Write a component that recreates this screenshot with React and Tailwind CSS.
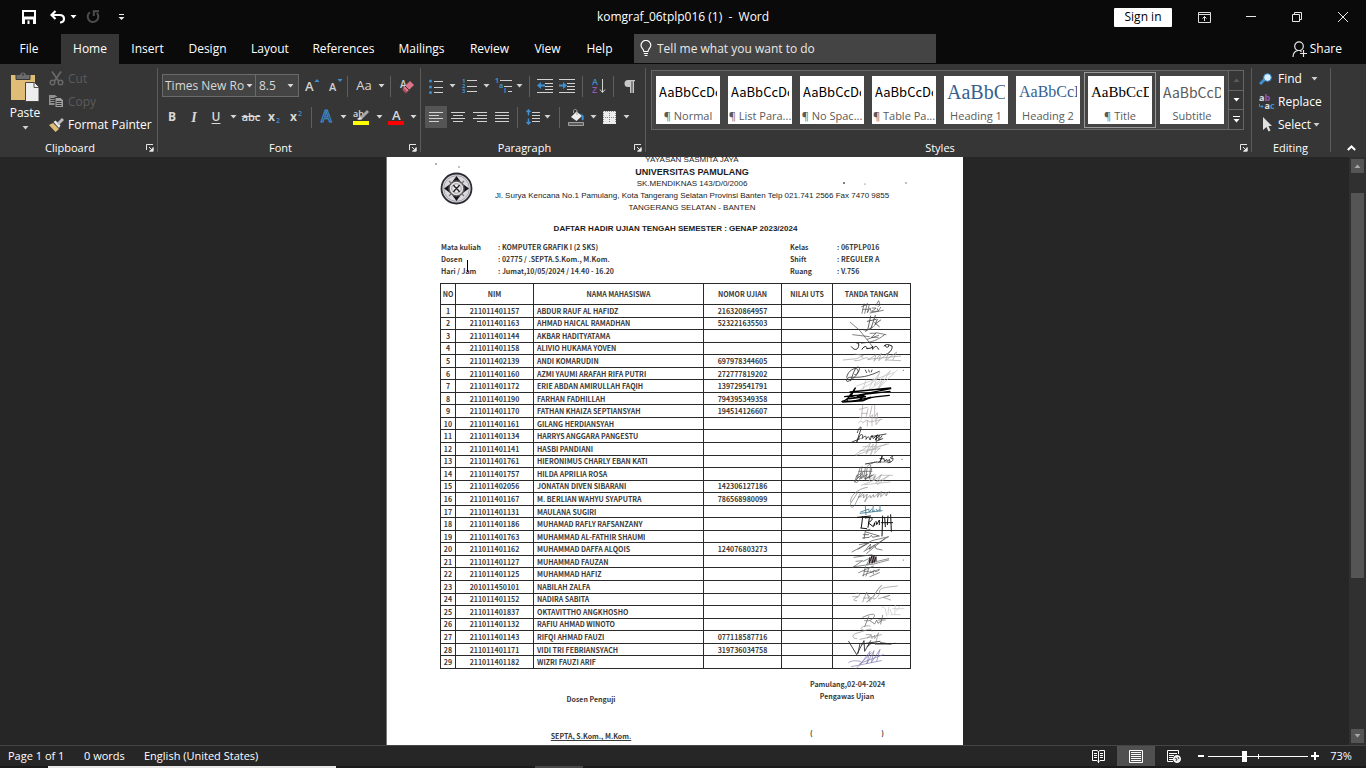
import React from "react";

const ui = "font-['Open_Sans','Noto_Sans',sans-serif]";

function Caret({ className = "" }) {
  return (
    <svg width="7" height="4" viewBox="0 0 7 4" className={"shrink-0 " + className} fill="currentColor" aria-hidden="true">
      <path d="M0.5 0h6L3.5 3.6z" />
    </svg>
  );
}

function IconButton({ label, className = "w-[22px]", children }) {
  return (
    <button type="button" aria-label={label} className={"flex h-[22px] shrink-0 items-center justify-center " + className}>
      {children}
    </button>
  );
}

function CaretButton({ label, className = "w-3" }) {
  return (
    <IconButton label={label} className={className}>
      <Caret />
    </IconButton>
  );
}

function Sep({ className = "mx-1" }) {
  return <div className={"h-[21px] w-px shrink-0 bg-[#5f5f5f] " + className} />;
}

function Launcher({ label }) {
  return (
    <button type="button" aria-label={label} className="flex h-3 w-3 items-center justify-center">
      <svg width="8" height="8" viewBox="0 0 8 8" fill="none" stroke="#e6e6e6" aria-hidden="true">
        <path d="M0.5 6V0.5H7M3 3l3 3" />
        <path d="M7.5 3v4.500H3z" fill="#e6e6e6" stroke="none" />
        <path d="M7 3.500V7H3.500" />
      </svg>
    </button>
  );
}

function Group({ title, className = "", launcher = true, children }) {
  return (
    <section aria-label={title} className={"flex shrink-0 flex-col border-r border-transparent " + className}>
      <div className="h-[76px]">{children}</div>
      <div className="flex h-4 items-center">
        <h2 className={"flex-1 text-center text-[11px] leading-4 " + (launcher ? "pr-1" : "")}>{title}</h2>
        {launcher && <Launcher label={title + " settings"} />}
      </div>
    </section>
  );
}

function Divider() {
  return <div className="mt-1 h-[84px] w-px shrink-0 bg-[#5c5c5c]" />;
}

function Lines({ rows, color = "#d2d2d2", width = 14, height = 11 }) {
  return (
    <svg width={width} height={height} viewBox={`0 0 ${width} ${height}`} stroke={color} aria-hidden="true">
      {rows.map(([a, b, y]) => (
        <path key={y} d={`M${a} ${y}H${b}`} />
      ))}
    </svg>
  );
}

function TitleBar() {
  return (
    <header className="grid h-[34px] grid-cols-[1fr_auto_1fr] items-center text-white">
      <div className="flex items-center pl-[22px]">
        <button type="button" aria-label="Save" className="flex w-[14px] justify-center">
          <svg width="14" height="14" viewBox="0 0 14 14" aria-hidden="true">
            <path fill="#fff" fillRule="evenodd" d="M0 0h14v14H0zM2 2v4.500h10V2zM3 9v5h8V9z" />
            <path fill="#0a0a0a" d="M3 9h8v3.500H3z" />
            <path fill="#fff" d="M2 8h10v1.500H2zM5.500 10.500h2V14h-2z" />
          </svg>
        </button>
        <button type="button" aria-label="Undo" className="ml-[14px]">
          <svg width="16" height="14" viewBox="0 0 16 14" fill="none" stroke="#fff" strokeWidth="2.200" aria-hidden="true">
            <path d="M5.500 1L1.500 5l4 4M2 5h7.500c3 0 4.500 1.700 4.500 4s-2 3.500-4 3.500" />
          </svg>
        </button>
        <button type="button" aria-label="Undo list" className="ml-1 text-white"><Caret /></button>
        <button type="button" aria-label="Repeat" disabled className="ml-[9px]">
          <svg width="14" height="14" viewBox="0 0 14 14" fill="none" stroke="#4d4d4d" strokeWidth="2" aria-hidden="true">
            <path d="M4 2.300A5.300 5.300 0 1 0 11 3.200M7.800 6V1.200H13" />
          </svg>
        </button>
        <button type="button" aria-label="Customize Quick Access Toolbar" className="ml-[18px]">
          <svg width="7" height="7" viewBox="0 0 7 7" fill="#e8e8e8" aria-hidden="true">
            <path d="M1 0h5v1H1zM0.500 3h6L3.500 6z" />
          </svg>
        </button>
      </div>
      <h1 className="text-[12px] leading-4 whitespace-pre">komgraf_06tplp016 (1)  -  Word</h1>
      <div className="flex items-center justify-end pr-[18px]">
        <button type="button" className="h-[19px] w-[58px] rounded-[1px] bg-white text-[12px] leading-[18px] text-black">Sign in</button>
        <button type="button" aria-label="Ribbon Display Options" className="ml-[26px]">
          <svg width="13" height="11" viewBox="0 0 13 11" fill="none" stroke="#e0e0e0" aria-hidden="true">
            <path d="M0.500 0.500h12v10H0.500zM0.500 2.500h12M6.500 9V4.500M4.500 6.500l2-2 2 2" />
          </svg>
        </button>
        <button type="button" aria-label="Minimize" className="ml-[35px]">
          <svg width="10" height="10" viewBox="0 0 10 10" stroke="#e8e8e8" aria-hidden="true"><path d="M0 4.500h10" /></svg>
        </button>
        <button type="button" aria-label="Restore Down" className="ml-9">
          <svg width="10" height="10" viewBox="0 0 10 10" fill="none" stroke="#e8e8e8" aria-hidden="true"><path d="M0.500 2.500h7v7h-7zM2.500 2.500v-2h7v7h-2" /></svg>
        </button>
        <button type="button" aria-label="Close" className="ml-9">
          <svg width="10" height="10" viewBox="0 0 10 10" fill="none" stroke="#e8e8e8" aria-hidden="true"><path d="M0 0l10 10M10 0L0 10" /></svg>
        </button>
      </div>
    </header>
  );
}

const tabs = [
  ["File", "w-[58px] mr-[3px]"],
  ["Home", "w-[58px] bg-[#363636]"],
  ["Insert", "w-[57px]"],
  ["Design", "w-[63px]"],
  ["Layout", "w-[62px]"],
  ["References", "w-[85px]"],
  ["Mailings", "w-[71px]"],
  ["Review", "w-[65px]"],
  ["View", "w-[51px]"],
  ["Help", "w-[53px]"],
];

function TabRow() {
  return (
    <nav className="flex h-[30px] items-stretch text-[12px] text-white">
      {tabs.map(([name, cls]) => (
        <button type="button" key={name} className={"shrink-0 text-center leading-[30px] " + cls}>{name}</button>
      ))}
      <label className="ml-2 flex h-[29px] w-[302px] items-center bg-[#444] pl-[6px]">
        <svg width="12" height="17" viewBox="0 0 12 17" fill="none" stroke="#fff" strokeWidth="1.200" aria-hidden="true">
          <path d="M3.800 11.500C3.800 9 1 8.300 1 5.300a4.800 4.800 0 0 1 9.800 0c0 3-2.800 3.700-2.800 6.200zM3.800 13.500H8M4.500 15.500h3" />
        </svg>
        <input aria-label="Tell me what you want to do" placeholder="Tell me what you want to do" className="ml-[5px] flex-1 bg-transparent text-[12px] outline-none placeholder:text-[#e8e8e8]" />
      </label>
      <button type="button" className="mr-6 ml-auto flex items-center">
        <svg width="16" height="17" viewBox="0 0 16 17" fill="none" stroke="#e8e8e8" strokeWidth="1.200" aria-hidden="true">
          <circle cx="7" cy="5.200" r="4.300" />
          <path d="M1 16c0-4 2.200-6 5-6.500M8 9.500l1.500 1.200M11.500 9v7M8 12.500h7" />
        </svg>
        <span className="ml-[2px]">Share</span>
      </button>
    </nav>
  );
}

function Clipboard() {
  return (
    <Group title="Clipboard" className="w-[157px]">
      <div className="flex h-full pl-[5px]">
        <button type="button" className="flex w-10 flex-col items-center justify-start pt-2">
          <svg width="28" height="30" viewBox="0 0 28 30" aria-hidden="true">
            <path fill="#e0bd76" d="M0 3h24v25H0z" />
            <path fill="#6b6b6b" stroke="#363636" strokeWidth="1" d="M5 2.500h4C9 .8 10.500 0 12 0s3 .8 3 2.500h4v5H5z" />
            <circle cx="12" cy="2.500" r="1" fill="#363636" />
            <path fill="#ededed" stroke="#444" strokeWidth="1" d="M14.500 10.500h9l4.500 4.500v14.500H14.500z" />
            <path fill="none" stroke="#555" d="M23 10.500v5h5" />
          </svg>
          <span className="mt-[3px] text-[12px] leading-4">Paste</span>
          <Caret className="mt-[5px] text-[#d0d0d0]" />
        </button>
        <div className="ml-1 flex flex-col pt-[3px] text-[12px] leading-[23px]">
          <button type="button" disabled className="flex h-[23px] items-center text-[#5c5c5c]">
            <svg width="15" height="15" viewBox="0 0 15 15" fill="none" stroke="#686868" strokeWidth="1.800" aria-hidden="true">
              <path d="M3 0.500l6.500 9.500M12 0.500L5.500 10" /><circle cx="3.500" cy="11.500" r="2.300" strokeWidth="1.500" /><circle cx="11.500" cy="11.500" r="2.300" strokeWidth="1.500" />
            </svg>
            <span className="ml-1">Cut</span>
          </button>
          <button type="button" disabled className="flex h-[23px] items-center text-[#5c5c5c]">
            <svg width="15" height="13" viewBox="0 0 15 13" aria-hidden="true">
              <path fill="#909090" d="M0 0h6l2.500 2v8H0z" /><path stroke="#363636" d="M1.500 3.500h5M1.500 5.500h5M1.500 7.500h5" />
              <path fill="#a0a0a0" stroke="#363636" d="M6 2.500h5.500l3 2.500v7.500H6z" /><path stroke="#363636" d="M7.500 6.500h5M7.500 8.500h5M7.500 10.500h5" />
            </svg>
            <span className="ml-1">Copy</span>
          </button>
          <button type="button" className="flex h-[23px] items-center">
            <svg width="15" height="14" viewBox="0 0 15 14" aria-hidden="true">
              <path fill="#e0bd76" d="M0 7l4-2 6 6-3.500 3z" /><path fill="#e8e8e8" d="M4.500 4l2-1.500 5 5L10 10z" /><path stroke="#b8b8b8" strokeWidth="3" d="M9 6l5-5" />
            </svg>
            <span className="ml-1 whitespace-nowrap">Format Painter</span>
          </button>
        </div>
      </div>
    </Group>
  );
}

function FontGroup() {
  return (
    <Group title="Font" className="w-[262px]">
      <div className="flex h-[33px] items-end pl-1 text-[#d8d8d8]">
        <div className="flex h-[23px] w-[94px] items-center border border-[#6a6a6a] bg-[#444]">
          <input aria-label="Font name" defaultValue="Times New Ro" className="w-[82px] bg-transparent pl-[2px] text-[12px] outline-none" />
          <button type="button" aria-label="Font list" className="ml-px"><Caret /></button>
        </div>
        <div className="-ml-px flex h-[23px] w-[44px] items-center border border-[#6a6a6a] bg-[#444]">
          <input aria-label="Font size" defaultValue="8.5" className="w-[31px] bg-transparent pl-[3px] text-[12px] outline-none" />
          <button type="button" aria-label="Font size list"><Caret /></button>
        </div>
        <IconButton label="Increase Font Size" className="ml-px w-6">
          <svg width="16" height="18" viewBox="0 0 16 18" aria-hidden="true"><text x="1" y="14" fontSize="13" fontWeight="600" fill="#d2d2d2">A</text><path fill="#3f8ed0" d="M10.500 5L13 2l2.500 3z" /></svg>
        </IconButton>
        <IconButton label="Decrease Font Size">
          <svg width="16" height="18" viewBox="0 0 16 18" aria-hidden="true"><text x="2" y="14" fontSize="11" fontWeight="600" fill="#d2d2d2">A</text><path fill="#3f8ed0" d="M10.500 2h5L13 5z" /></svg>
        </IconButton>
        <Sep className="ml-px mr-1" />
        <IconButton label="Change Case" className="w-6"><span className="text-[13px]">Aa</span></IconButton>
        <CaretButton label="Case options" className="w-[10px]" />
        <Sep className="mr-2 ml-1" />
        <IconButton label="Clear All Formatting" className="w-4">
          <svg width="16" height="18" viewBox="0 0 16 18" aria-hidden="true"><text x="1" y="11" fontSize="10" fontWeight="600" fill="#d2d2d2">A</text><path fill="#dd7488" d="M4 11l7-7 4 4-7 7z" /><path fill="#b9505f" d="M4 11l4 4-1 1.500L3.500 13z" /><path stroke="#363636" d="M6 9l4.500 4.500" /></svg>
        </IconButton>
      </div>
      <div className="flex h-[31px] items-end pl-[3px] text-[#d8d8d8]">
        <IconButton label="Bold"><b className="text-[12px]">B</b></IconButton>
        <IconButton label="Italic"><i className="font-['Liberation_Serif',serif] text-[14px] font-bold">I</i></IconButton>
        <IconButton label="Underline"><span className="text-[12px] font-semibold underline underline-offset-2">U</span></IconButton>
        <CaretButton label="Underline options" />
        <IconButton label="Strikethrough" className="w-6"><span className="text-[11px] font-semibold line-through">abc</span></IconButton>
        <IconButton label="Subscript"><svg width="14" height="18" viewBox="0 0 14 18" aria-hidden="true"><text x="1" y="13" fontSize="12" fontWeight="700" fill="#d8d8d8">x</text><text x="9" y="15" fontSize="7" fontWeight="600" fill="#3f8ed0">2</text></svg></IconButton>
        <IconButton label="Superscript"><svg width="14" height="18" viewBox="0 0 14 18" aria-hidden="true"><text x="1" y="13" fontSize="12" fontWeight="700" fill="#d8d8d8">x</text><text x="9" y="8" fontSize="7" fontWeight="600" fill="#3f8ed0">2</text></svg></IconButton>
        <Sep className="mx-1" />
        <IconButton label="Text Effects"><svg width="16" height="20" viewBox="0 0 16 20" aria-hidden="true"><text x="2" y="15" fontSize="16" fontWeight="600" fill="#2b3a4a" stroke="#3f8ed0" strokeWidth="1">A</text></svg></IconButton>
        <CaretButton label="Text effect options" className="w-[10px]" />
        <IconButton label="Text Highlight Color" className="w-[26px]">
          <svg width="16" height="18" viewBox="0 0 16 18" aria-hidden="true"><text x="0" y="9" fontSize="9" fontWeight="600" fill="#d8d8d8">ab</text><path stroke="#a9a9a9" strokeWidth="3" d="M7 11l8-8" /><path fill="#e8e8e8" d="M4 11l3-2 2 2-3 1z" /><path fill="#ff0" d="M0 13h16v4H0z" /></svg>
        </IconButton>
        <CaretButton label="Highlight options" className="w-[10px]" />
        <IconButton label="Font Color" className="w-[24px]">
          <svg width="16" height="18" viewBox="0 0 16 18" aria-hidden="true"><text x="4" y="12" fontSize="13" fontWeight="600" fill="#d8d8d8">A</text><path fill="#f00" d="M0 13h16v4H0z" /></svg>
        </IconButton>
        <CaretButton label="Font color options" className="w-[10px]" />
      </div>
    </Group>
  );
}

function Paragraph() {
  return (
    <Group title="Paragraph" className="w-[224px]">
      <div className="flex h-[33px] items-end pl-[6px] text-[#d2d2d2]">
        <IconButton label="Bullets" className="w-[18px]">
          <svg width="14" height="15" viewBox="0 0 14 15" stroke="#d2d2d2" aria-hidden="true"><path d="M5 2.500h9M5 8.500h9M5 13.500h9" /><g fill="#3f8ed0" stroke="none"><circle cx="1.500" cy="2" r="1.500" /><circle cx="1.500" cy="8" r="1.500" /><circle cx="1.500" cy="13.500" r="1.500" /></g></svg>
        </IconButton>
        <CaretButton label="Bullet options" className="w-[14px]" />
        <IconButton label="Numbering" className="w-[20px]">
          <svg width="15" height="18" viewBox="0 0 15 18" stroke="#d2d2d2" aria-hidden="true"><path d="M5 3.500h10M5 9.500h10M5 14.500h10" /><g fill="#3f8ed0" stroke="none" fontSize="6" fontWeight="700"><text x="0" y="6">1</text><text x="0" y="11">2</text><text x="0" y="16">3</text></g></svg>
        </IconButton>
        <CaretButton label="Numbering options" className="w-[14px]" />
        <IconButton label="Multilevel List" className="w-[20px]">
          <svg width="17" height="18" viewBox="0 0 17 18" stroke="#d2d2d2" aria-hidden="true"><path d="M5 3.500h12M9 9.500h8M13 14.500h4" /><g fill="#3f8ed0" stroke="none" fontSize="7" fontWeight="700"><text x="0" y="6">1</text><text x="4" y="11">a</text><text x="9" y="16">i</text></g></svg>
        </IconButton>
        <CaretButton label="List options" className="w-[12px]" />
        <Sep className="mx-1" />
        <IconButton label="Decrease Indent">
          <svg width="16" height="14" viewBox="0 0 16 14" stroke="#d2d2d2" aria-hidden="true"><path d="M0 0.500h16M8 4.500h8M8 7.500h8M8 10.500h8M0 13.500h16" /><path fill="#3f8ed0" stroke="none" d="M0 6.500L4 3v2.500h4v2H4V10z" /></svg>
        </IconButton>
        <IconButton label="Increase Indent">
          <svg width="16" height="14" viewBox="0 0 16 14" stroke="#d2d2d2" aria-hidden="true"><path d="M0 0.500h16M8 4.500h8M8 7.500h8M8 10.500h8M0 13.500h16" /><path fill="#3f8ed0" stroke="none" d="M8 6.500L4 3v2.500H0v2h4V10z" /></svg>
        </IconButton>
        <Sep className="mr-1 ml-1" />
        <IconButton label="Sort" className="w-6">
          <svg width="14" height="18" viewBox="0 0 14 18" aria-hidden="true"><text x="0" y="8" fontSize="9" fontWeight="600" fill="#3f8ed0">A</text><text x="0" y="16" fontSize="9" fontWeight="600" fill="#9259b5">Z</text><path fill="none" stroke="#d2d2d2" d="M10.500 2v13M8 12.500l2.500 3 2.500-3" /></svg>
        </IconButton>
        <Sep className="mr-1 ml-[2px]" />
        <IconButton label="Show or hide marks">
          <svg width="11" height="13" viewBox="0 0 11 13" aria-hidden="true"><path fill="#c8c8c8" d="M4 0h7v1.200h-1V13H8.500V1.200h-1V13H6V7H4a3.500 3.500 0 0 1 0-7z" /></svg>
        </IconButton>
      </div>
      <div className="flex h-[31px] items-end pl-1 text-[#d2d2d2]">
        <IconButton label="Align Left" className="w-[22px] bg-[#555]"><Lines rows={[[0, 14, 0.5], [0, 10, 3.5], [0, 14, 6.5], [0, 10, 9.5]]} /></IconButton>
        <IconButton label="Center"><Lines rows={[[0, 14, 0.5], [2, 12, 3.5], [0, 14, 6.5], [2, 12, 9.5]]} /></IconButton>
        <IconButton label="Align Right"><Lines rows={[[0, 14, 0.5], [4, 14, 3.5], [0, 14, 6.5], [4, 14, 9.5]]} /></IconButton>
        <IconButton label="Justify"><Lines rows={[[0, 14, 0.5], [0, 14, 3.5], [0, 14, 6.5], [0, 14, 9.5]]} /></IconButton>
        <Sep className="mx-1" />
        <IconButton label="Line Spacing">
          <svg width="14" height="16" viewBox="0 0 14 16" fill="none" stroke="#d2d2d2" aria-hidden="true"><path d="M6 3.500h8M6 6.500h8M6 9.500h8M6 12.500h8" /><path stroke="#3f8ed0" strokeWidth="1.500" d="M2.500 1v5.500M0.500 3l2-2 2 2M2.500 15V9.500M0.500 13l2 2 2-2" /></svg>
        </IconButton>
        <CaretButton label="Spacing options" className="w-[6px]" />
        <Sep className="mr-1 ml-[9px]" />
        <IconButton label="Shading" className="w-6">
          <svg width="17" height="17" viewBox="0 0 17 17" aria-hidden="true"><path fill="#ededed" d="M3 8l5.500-5.500L14 7l-5.500 5z" /><path fill="none" stroke="#a0a0a0" d="M5.500 4V1.500C5.500 0 9 0 9 2v4" /><path fill="#3f8ed0" d="M12 5c3 0 4.500 2 3.500 6-1 1-2 0-2-1 .5-1.500.5-3-1.500-5z" /><path fill="#5a5a5a" stroke="#a0a0a0" d="M0.500 13.500h15v3h-15z" /></svg>
        </IconButton>
        <CaretButton label="Shading options" className="w-[10px]" />
        <IconButton label="Borders" className="w-[22px]">
          <svg width="13" height="13" viewBox="0 0 13 13" aria-hidden="true"><path fill="#ededed" d="M0 0h13v13H0z" /><path stroke="#8a8a8a" strokeDasharray="1 1" d="M0.500 0v12M12.500 0v12M6.500 0v12M0 0.500h13M0 6.500h13" /></svg>
        </IconButton>
        <CaretButton label="Border options" className="w-[12px]" />
      </div>
    </Group>
  );
}

const calibri = "font-['Noto_Sans_CJK_SC',sans-serif] text-[13px] text-black";
const styles = [
  ["¶ Normal", "AaBbCcDc", calibri],
  ["¶ List Para...", "AaBbCcDc", calibri],
  ["¶ No Spac...", "AaBbCcDc", calibri],
  ["¶ Table Pa...", "AaBbCcDc", calibri],
  ["Heading 1", "AaBbC", "font-['Liberation_Serif',serif] text-[20px] text-[#365f91]"],
  ["Heading 2", "AaBbCcI", "font-['Liberation_Serif',serif] text-[16px] text-[#365f91]"],
  ["¶ Title", "AaBbCcD", "font-['Liberation_Serif',serif] text-[15px] text-black"],
  ["Subtitle", "AaBbCcD", "font-['Noto_Sans_CJK_SC',sans-serif] text-[14px] text-[#5a5a5a]"],
];

function Styles() {
  return (
    <Group title="Styles" className="min-w-0 flex-1">
      <div className="flex h-full items-start pt-[6px] pr-[7px] pl-[5px]">
        <div className="flex h-[60px] flex-1 border border-[#666] bg-[#444]">
          <div className="flex flex-1 py-px">
            {styles.map(([name, sample, cls]) => (
              <button
                type="button"
                key={name}
                className={"flex h-[56px] w-[72px] shrink-0 border p-[3px] " + (name === "¶ Title" ? "border-[#9a9a9a]" : "border-transparent")}
              >
                <span className="flex h-12 w-16 flex-col overflow-hidden bg-white px-[3px]">
                  <span className={"flex h-8 items-center overflow-hidden whitespace-nowrap " + cls}>{sample}</span>
                  <span className="-mx-[3px] h-4 text-center text-[11px] leading-4 whitespace-nowrap text-[#5a5a5a]">{name}</span>
                </span>
              </button>
            ))}
          </div>
          <div className="flex w-[15px] flex-col divide-y divide-[#666] border-l border-[#666] bg-[#363636] text-white">
            <button type="button" aria-label="Previous styles" className="flex flex-1 items-center justify-center text-[#5c5c5c]"><Caret className="rotate-180" /></button>
            <button type="button" aria-label="Next styles" className="flex flex-1 items-center justify-center"><Caret /></button>
            <button type="button" aria-label="More styles" className="flex flex-1 items-center justify-center">
              <svg width="7" height="7" viewBox="0 0 7 7" fill="currentColor" aria-hidden="true"><path d="M0 0h7v1H0zM0.500 3h6L3.500 6.500z" /></svg>
            </button>
          </div>
        </div>
      </div>
    </Group>
  );
}

function Editing() {
  return (
    <Group title="Editing" launcher={false} className="w-[78px]">
      <div className="flex flex-col pt-[3px] pl-[7px] text-[12px]">
        <button type="button" className="flex h-[23px] items-center">
          <svg width="14" height="12" viewBox="0 0 14 12" aria-hidden="true"><path stroke="#3f8ed0" strokeWidth="3" d="M1 11l5-5" /><circle cx="8.500" cy="4.500" r="3.800" fill="#d9efff" stroke="#3f8ed0" /></svg>
          <span className="ml-[5px]">Find</span><Caret className="ml-[9px] text-[#d0d0d0]" />
        </button>
        <button type="button" className="flex h-[23px] items-center">
          <svg width="17" height="18" viewBox="0 0 17 18" aria-hidden="true"><g fontSize="9" fontWeight="700"><text x="0" y="8" fill="#e0e0e0">a</text><text x="5.500" y="8" fill="#9259b5">b</text><text x="5.500" y="16" fill="#e0e0e0">a</text><text x="11" y="16" fill="#3f8ed0">c</text></g><path fill="none" stroke="#3f8ed0" d="M0.500 11v2.500H4M2.500 12L4 13.500 2.500 15" /></svg>
          <span className="ml-[2px]">Replace</span>
        </button>
        <button type="button" className="flex h-[23px] items-center pl-1">
          <svg width="9" height="15" viewBox="0 0 9 15" aria-hidden="true"><path fill="#e0e0e0" d="M0 0l9 9H5.500l2 4.500-2 1L3.500 10 0 13z" /></svg>
          <span className="ml-[6px]">Select</span><Caret className="ml-[2px] text-[#d0d0d0]" />
        </button>
      </div>
    </Group>
  );
}

function Ribbon() {
  return (
    <div className="flex h-[93px] shrink-0 bg-[#363636] text-white">
      <Clipboard />
      <Divider />
      <FontGroup />
      <Divider />
      <Paragraph />
      <Divider />
      <Styles />
      <Divider />
      <Editing />
      <Divider />
      <button type="button" aria-label="Collapse the Ribbon" className="flex w-[35px] items-end justify-center pr-0 pb-[6px] pl-[6px]">
        <svg width="9" height="6" viewBox="0 0 9 6" fill="none" stroke="#fff" strokeWidth="2" aria-hidden="true"><path d="M0.800 5l3.700-3.500L8.200 5" /></svg>
      </button>
    </div>
  );
}

const students = [
  ["211011401157", "ABDUR RAUF AL HAFIDZ", "216320864957"],
  ["211011401163", "AHMAD HAICAL RAMADHAN", "523221635503"],
  ["211011401144", "AKBAR HADITYATAMA", ""],
  ["211011401158", "ALIVIO HUKAMA YOVEN", ""],
  ["211011402139", "ANDI KOMARUDIN", "697978344605"],
  ["211011401160", "AZMI YAUMI ARAFAH RIFA PUTRI", "272777819202"],
  ["211011401172", "ERIE ABDAN AMIRULLAH FAQIH", "139729541791"],
  ["211011401190", "FARHAN FADHILLAH", "794395349358"],
  ["211011401170", "FATHAN KHAIZA SEPTIANSYAH", "194514126607"],
  ["211011401161", "GILANG HERDIANSYAH", ""],
  ["211011401134", "HARRYS ANGGARA PANGESTU", ""],
  ["211011401141", "HASBI PANDIANI", ""],
  ["211011401761", "HIERONIMUS CHARLY EBAN KATI", ""],
  ["211011401757", "HILDA APRILIA ROSA", ""],
  ["211011402056", "JONATAN DIVEN SIBARANI", "142306127186"],
  ["211011401167", "M. BERLIAN WAHYU SYAPUTRA", "786568980099"],
  ["211011401131", "MAULANA SUGIRI", ""],
  ["211011401186", "MUHAMAD RAFLY RAFSANZANY", ""],
  ["211011401763", "MUHAMMAD AL-FATHIR SHAUMI", ""],
  ["211011401162", "MUHAMMAD DAFFA ALQOIS", "124076803273"],
  ["211011401127", "MUHAMMAD FAUZAN", ""],
  ["211011401125", "MUHAMMAD HAFIZ", ""],
  ["201011450101", "NABILAH ZALFA", ""],
  ["211011401152", "NADIRA SABITA", ""],
  ["211011401837", "OKTAVITTHO ANGKHOSHO", ""],
  ["211011401132", "RAFIU AHMAD WINOTO", ""],
  ["211011401143", "RIFQI AHMAD FAUZI", "077118587716"],
  ["211011401171", "VIDI TRI FEBRIANSYACH", "319736034758"],
  ["211011401182", "WIZRI FAUZI ARIF", ""],
];

function Signatures() {
  return (
    <svg width="81" height="374" viewBox="150 54 243 1122" fill="none" strokeLinecap="round" strokeLinejoin="round" className="pointer-events-none absolute top-[15px] right-0" aria-hidden="true">
      <g stroke="#444" strokeWidth="2">
        <path d="M245 80l16-6M252 72l-6 28M262 70l-8 30M248 88h16M268 74l-6 24 8-14 4 12M276 84h12l-12 10h14M292 86l2 8 8-12M270 99l40-8M288 76l8-14 4 12-6 6" />
        <path d="M272 108l-8 38M286 106l-14 42-20 2M292 118l-8 18M262 124l26-6M286 132l16-12M284 128l14 12M256 154l24-14" strokeWidth="2.500" />
        <path d="M211 127l28 24 38 48M218 164l50 6M270 160h18l-14 12h20M244 190c20-4 40-2 70-26M262 178l34-12M288 158l30 6" />
        <path d="M228 188l8 2c2 16-8 22-16 16l-6-6M246 208c4-10 16-12 14-2l14-2 4-6v10c4-8 10-12 14-6l4 6M312 198c6-6 14-6 14 0s-12 4-10-2M326 194l10 4c2 10-6 20-16 24" stroke="#222" strokeWidth="3" />
      </g>
      <g stroke="#999" strokeWidth="2">
        <path d="M190 240l40-4 20-10-26-4M224 242c20 0 34-8 20-12M250 236c10-6 20-2 14 4l24-16-6 20 22-24-8 22 30-24-10 24 34-26-12 24M264 238l98-10M320 240l42 2" />
        <path d="M240 330l40-24 20-30-18 40 50-44-36 52 56-54M230 318l110-40M258 300l-10 30M280 296l-14 36 40-30-14 26" stroke="#bbb" />
      </g>
      <path d="M212 302c10-30 16-44 24-40s-6 26-12 22M200 292c4-24 30-32 34-22s-16 30-30 34c-8 2-6-10 4-12 20-2 40 6 90-18M256 270l4 8M266 270l2 6M276 270l-2 6" stroke="#333" strokeWidth="2.500" />
      <circle cx="370" cy="271" r="1.500" fill="#333" />
      <g stroke="#000" strokeWidth="4">
        <path d="M186 364c20-4 26-20 40-40l-14 26 120-24M210 336l122-12M194 350l136-16M214 340c-14 18-20 26 0 24 30-4 50-14 114-18M232 350l20-4-12 12 28-4" />
        <path d="M188 366l60-4 24-10M206 356l50-6" strokeWidth="5" />
      </g>
      <g stroke="#a39a9e" strokeWidth="2">
        <path d="M238 388l24-6M248 376l-4 40M264 386l-6 26M246 400h16M276 378l-8 36 10-10v10M284 376v38M286 408l6-10v16M236 428c10-10 8-4 12 0l12-8 10 6 36-8M262 422v16M276 418v20M288 414v20l12-14M238 412l56 2" />
      </g>
      <g stroke="#222" strokeWidth="2.500"><path d="M232 458c6-20 14-22 10-8l-12 36 10-20c8-6 10 0 6 10 10-12 14-8 12 2 6-12 10-8 12 2l6-14 4 10 12-12-6 16 12-14-2 14 10-12M216 486l24-10M272 470l46-8M290 468l-2 16 20-8" /></g>
      <path d="M226 524l30-20 16-16-14 34 22-30-8 32 18-34-6 30 16-16M228 526l92-34M248 500h42l36-8M240 512l60-6" stroke="#aaa" strokeWidth="2" />
      <g stroke="#111" strokeWidth="2.500"><path d="M256 552l34-6M294 548c8-4 14-16 12-20l-6 20M300 536h12M312 538l2 6 6-6 2 6 6-6 2 6M338 530c-10 0-8 8 0 4 4 8-6 14-14 14" /><path d="M290 546h40" strokeWidth="1.500" /></g>
      <circle cx="366" cy="538" r="1.500" fill="#333" />
      <path d="M240 564l-8 30M246 560l-6 36 10-10 4 10M256 564l-4 24M262 560l-6 40 10-12M272 556l-4 40M276 562l-8 32M224 606c10-20 20-20 16-10s-16 18-14 6M264 556l20-10M236 574h40" stroke="#555" strokeWidth="2" />
      <path d="M276 584l-8 18 20-18-6 18 22-18-6 14M304 586h34" stroke="#aaa" strokeWidth="2" />
      <g transform="translate(0 570)" strokeWidth="2">
        <path d="M228 20l24-16M232 14l-8 20 24-24-4 16 18-14-6 14 20-10M262 24l20-10M284 20l-6 12" stroke="#555" />
        <path d="M244 46l40-16 20-16-16 24 40-22-36 28M254 44l76-8" stroke="#aaa" />
        <path d="M234 66l-22 34c-4 14 8 16 14 2l16-34c8-4 6 8-8 14 12-2 14-6 18-10l-2 12 12-12-4 16c-2 12-8 8 0 0l12-12 2 8 8-10 2 8 14-14-4 14 12-18-2 16 16-14v12l10-14M212 96c-4-16 20-40 50-44" stroke="#777" />
        <path d="M242 126l22-8M256 108l2 26M266 118l2 8 8-10M280 106l-2 20 6-6M290 118l2 6 6-6M300 106v18M240 130l66-8" stroke="#39738a" strokeWidth="2.500" />
        <path d="M232 142l40-4M248 140l-4 32M268 144l-4 28M256 144c26-6 26 6 8 14l16 12 4-12v8M288 154l2 10 8-14v14M308 138l-2 60M314 142l2 28M324 138l-2 26M332 134l2 50M304 158h34M242 174l18 2" stroke="#111" strokeWidth="3" />
        <path d="M254 182l16-4M256 184l-4 22M250 194h16M248 204l20-2 6-6 4 6 18-4M258 186l40 12" stroke="#333" />
        <path d="M216 246l60-34 50-12-74 44M238 224l30-6-34 20M258 238l14-16-4 16 16-12 4 10 18 4M260 250l54-44" stroke="#444" />
        <path d="M222 262l54-8M228 274l20-2-30 20M250 274l20-10-10 20 28-14M222 290l60-8 44-12M292 274l34-8" stroke="#555" />
        <path d="M270 262l-2 18 8-22v22l6-22v20l6-18v16" stroke="#221315" strokeWidth="3" />
        <circle cx="370" cy="270" r="1.500" fill="#333" />
        <path d="M236 308l44-20M256 290l-6 28M266 296l-8 22M252 304h14M270 308c-4-4 6-8 4 0l6-6v10M282 300l6 6 10-6M248 316l50-18M270 320l28-12" stroke="#555" />
        <path d="M218 380h16M228 370c14-4 14 8 0 14-10 6-8 8 2 8M248 396l12-30 10 28M250 384h20M262 374l14 12-16 10 22-20 18-26c10-10 4 0-8 10l-14 26c10 4 20-10 20-20 0-16 30-14 54-18M296 386l34-10-20 6 22 8" stroke="#888" />
        <path d="M306 410l10 6 4 22M326 412l-2 22M330 418l6 14M346 406l-2 28M338 416h34M350 422l10-14M332 434h28" stroke="#c4c4c4" />
        <path d="M248 442c30-14 44-12 30 4-10 8-14 6-24 6M266 440l-12 30M270 452l14 10 6-12 4 10 8-6M308 436l-6 26M296 450h20" stroke="#555" />
        <path d="M250 480c-20-4 6-16 20-12M230 506c-16 0-16-14 6-18 30-10 40-16 40-4M258 494h16l-12 10M274 496l2 10 8-10v10l12-18-10 34M240 508l64-14" stroke="#888" />
        <path d="M206 514l24 40 22-42M240 520l-6 30M252 514l2 30 18-32M262 530l14-12M246 522l54-8M286 522h40l20-2M302 518l30 4" stroke="#222" strokeWidth="2.500" />
        <path d="M206 578c10-8 20-6 36-4M228 596l46-48M240 584l30-40-10 38 22-40-8 36 26-40-10 36M214 590l90-18M240 580l70-26" stroke="#7a74ad" />
      </g>
    </svg>
  );
}

function Emblem() {
  return (
    <svg width="33" height="33" viewBox="0 0 33 33" className="mt-[18px] shrink-0" aria-label="Universitas Pamulang emblem" role="img">
      <circle cx="16.500" cy="16.500" r="15" fill="#dcd9de" stroke="#2b2b33" strokeWidth="1.800" />
      <circle cx="16.500" cy="16.500" r="12.800" fill="none" stroke="#a5a2aa" strokeWidth="1" />
      <path fill="#15151a" d="M16.500 4l4 5.500h-8zM16.500 29l4-5.500h-8zM4 16.500l5.500-4v8zM29 16.500l-5.500-4v8z" />
      <circle cx="16.500" cy="16.500" r="7.500" fill="#e9e7eb" stroke="#555" strokeWidth="1.500" />
      <circle cx="16.500" cy="16.500" r="4.800" fill="none" stroke="#999" strokeWidth="1" />
      <path fill="none" stroke="#222" strokeWidth="1.500" d="M13.500 13c1.500 3 4.500 4 6 7M19.500 13c-1.500 3-4.500 4-6 7" />
      <path fill="none" stroke="#777" strokeWidth="1.300" d="M9 9l3 3M24 9l-3 3M9 24l3-3M24 24l-3-3" />
    </svg>
  );
}

function Info({ rows, className }) {
  return (
    <dl className={"grid leading-3 " + className}>
      {rows.map(([k, v]) => (
        <React.Fragment key={k}>
          <dt>{k}</dt>
          <dd className="whitespace-nowrap">: {v}</dd>
        </React.Fragment>
      ))}
    </dl>
  );
}

function Page() {
  const head = "border border-[#2a2a2a] p-0 font-bold";
  const cell = "border border-[#2a2a2a] p-0";
  return (
    <article className="relative w-[577px] shrink-0 overflow-hidden border-l border-[#777] bg-white pr-[52px] pl-[53px] font-['Noto_Sans_CJK_SC',sans-serif] text-[7px] font-bold text-[#3a3a3a]">
      <div className="-mt-[3px] flex font-['Liberation_Sans',sans-serif] text-[8px] leading-3 font-normal text-[#1c1c1c]">
        <Emblem />
        <div className="flex-1 text-center whitespace-nowrap">
          <p>YAYASAN SASMITA JAYA</p>
          <p className="text-[9px] font-bold">UNIVERSITAS PAMULANG</p>
          <p>SK.MENDIKNAS 143/D/0/2006</p>
          <p>Jl. Surya Kencana No.1 Pamulang, Kota Tangerang Selatan Provinsi Banten Telp 021.741 2566 Fax 7470 9855</p>
          <p>TANGERANG SELATAN - BANTEN</p>
        </div>
      </div>
      <h2 className="mt-[9px] text-center font-['Liberation_Sans',sans-serif] text-[8px] leading-3 font-bold text-[#1c1c1c]">DAFTAR HADIR UJIAN TENGAH SEMESTER : GENAP 2023/2024</h2>
      <div className="mt-[6px] flex justify-between">
        <Info className="grid-cols-[57px_auto] pl-px" rows={[["Mata kuliah", "KOMPUTER GRAFIK I (2 SKS)"], ["Dosen", "02775 / .SEPTA.S.Kom., M.Kom."], ["Hari / Jam", "Jumat,10/05/2024 / 14.40 - 16.20"]]} />
        <Info className="w-[121px] grid-cols-[47px_auto]" rows={[["Kelas", "06TPLP016"], ["Shift", "REGULER A"], ["Ruang", "V.756"]]} />
      </div>
      <div className="relative mt-[6px]">
        <table className="h-[386px] w-full table-fixed border-collapse text-center leading-[10px]">
          <colgroup>
            <col className="w-[15px]" />
            <col className="w-[78px]" />
            <col className="w-[170px]" />
            <col className="w-[78px]" />
            <col className="w-[51px]" />
            <col />
          </colgroup>
          <thead>
            <tr className="h-[21px]">
              {["NO", "NIM", "NAMA MAHASISWA", "NOMOR UJIAN", "NILAI UTS", "TANDA TANGAN"].map((h) => (
                <th key={h} scope="col" className={head}>{h}</th>
              ))}
            </tr>
          </thead>
          <tbody>
            {students.map(([nim, name, no], i) => (
              <tr key={nim}>
                <td className={cell}>{i + 1}</td>
                <td className={cell}>{nim}</td>
                <td className={cell + " pl-[3px] text-left whitespace-nowrap"}>{name}</td>
                <td className={cell}>{no}</td>
                <td className={cell}></td>
                <td className={cell}></td>
              </tr>
            ))}
          </tbody>
        </table>
        <Signatures />
      </div>
      <div className="mt-[9px] flex justify-between leading-3">
        <div className="ml-[91px] w-[120px] pt-[15px] text-center">
          <p>Dosen Penguji</p>
          <p className="mt-[25px] underline">SEPTA, S.Kom., M.Kom.</p>
        </div>
        <div className="mr-[27px] w-[74px] text-center whitespace-nowrap">
          <p>Pamulang,02-04-2024</p>
          <p>Pengawas Ujian</p>
          <p className="mt-[25px] flex justify-between"><span>(</span><span>)</span></p>
        </div>
      </div>
      <div className="absolute top-[103px] left-20 h-3 w-px bg-black" />
      <svg width="577" height="40" viewBox="0 0 577 40" className="pointer-events-none absolute top-0 left-0" aria-hidden="true">
        <g fill="#555"><circle cx="49" cy="7" r="0.800" /><circle cx="72" cy="10" r="0.700" /><circle cx="457" cy="26" r="1" /><circle cx="478" cy="27" r="0.600" /><circle cx="519" cy="26" r="0.700" /></g>
      </svg>
    </article>
  );
}

function ScrollBar() {
  const btn = "flex h-[14px] w-[13px] items-center justify-center bg-[#555] text-[#a8a8a8]";
  return (
    <div className="flex w-[17px] shrink-0 flex-col items-center bg-[#303030] pt-[2px] pb-[2px]">
      <button type="button" aria-label="Scroll up" className={btn}><Caret className="rotate-180" /></button>
      <div className="mt-5 h-[385px] w-[13px] bg-[#555]" />
      <button type="button" aria-label="Scroll down" className={btn + " mt-auto"}><Caret /></button>
    </div>
  );
}

function StatusBar() {
  return (
    <footer className="flex h-[21px] shrink-0 items-stretch border-t border-[#444] bg-[#262626] pl-2 text-[11px] leading-5 text-white">
      <span className="w-[76px]">Page 1 of 1</span>
      <span className="w-[60px]">0 words</span>
      <span>English (United States)</span>
      <div className="ml-auto flex items-stretch">
        <button type="button" aria-label="Read Mode" className="flex w-[38px] items-center justify-center">
          <svg width="13" height="13" viewBox="0 0 13 13" fill="none" stroke="#fff" aria-hidden="true"><path d="M6.500 1.500L5 0.500H0.500v10H5l1.500 1.500L8 10.500h4.500v-10H8zM6.500 1.500V13M2 3.500h3M2 5.500h3M2 7.500h3M8 3.500h3M8 5.500h3M8 7.500h3" /></svg>
        </button>
        <button type="button" aria-label="Print Layout" className="flex w-[38px] items-center justify-center bg-[#505050]">
          <svg width="14" height="13" viewBox="0 0 14 13" fill="none" stroke="#fff" aria-hidden="true"><path d="M0.500 0.500h13v12H0.500zM2 2.500h10M2 4.500h10M2 6.500h10M2 8.500h10M2 10.500h10" /></svg>
        </button>
        <button type="button" aria-label="Web Layout" className="flex w-[38px] items-center justify-center">
          <svg width="14" height="13" viewBox="0 0 14 13" fill="none" stroke="#fff" aria-hidden="true"><path d="M6 11.500H0.500v-11h11V4M2 3.500h8M2 5.500h5M2 7.500h4M2 9.500h4" /><circle cx="10" cy="9" r="3.500" fill="#e8e8e8" /><path stroke="#444" d="M8 8l2 1-1 2M11 7l1 2" /></svg>
        </button>
        <button type="button" aria-label="Zoom Out" className="ml-[5px] flex items-center"><span className="h-[2px] w-[6px] bg-white" /></button>
        <div className="relative ml-1 flex w-[100px] items-center">
          <span className="absolute top-[8px] left-[50px] h-[5px] w-px bg-white" />
          <input
            type="range"
            aria-label="Zoom"
            min="0"
            max="100"
            defaultValue="36"
            className="h-[11px] w-full appearance-none bg-transparent [&::-webkit-slider-runnable-track]:h-px [&::-webkit-slider-runnable-track]:bg-white [&::-webkit-slider-thumb]:-mt-[5px] [&::-webkit-slider-thumb]:h-[11px] [&::-webkit-slider-thumb]:w-[5px] [&::-webkit-slider-thumb]:appearance-none [&::-webkit-slider-thumb]:bg-white"
          />
        </div>
        <button type="button" aria-label="Zoom In" className="ml-[3px] flex items-center">
          <svg width="8" height="8" viewBox="0 0 8 8" stroke="#fff" strokeWidth="2" aria-hidden="true"><path d="M0 4h8M4 0v8" /></svg>
        </button>
        <button type="button" className="mr-[14px] ml-[11px] w-[22px] whitespace-nowrap">73%</button>
      </div>
    </footer>
  );
}

export default function App() {
  return (
    <div className={"flex h-screen flex-col overflow-hidden bg-[#0a0a0a] " + ui}>
      <TitleBar />
      <TabRow />
      <Ribbon />
      <main className="flex min-h-0 flex-1 bg-[#262626]">
        <div className="flex min-w-0 flex-1 justify-center overflow-hidden">
          <Page />
        </div>
        <ScrollBar />
      </main>
      <StatusBar />
      <div className="flex h-[2px] shrink-0 bg-[#1a1a1a] pl-12">
        <div className="w-72 bg-[#e8e8e8]" />
        <div className="ml-[199px] w-12 bg-[#484848]" />
      </div>
    </div>
  );
}
